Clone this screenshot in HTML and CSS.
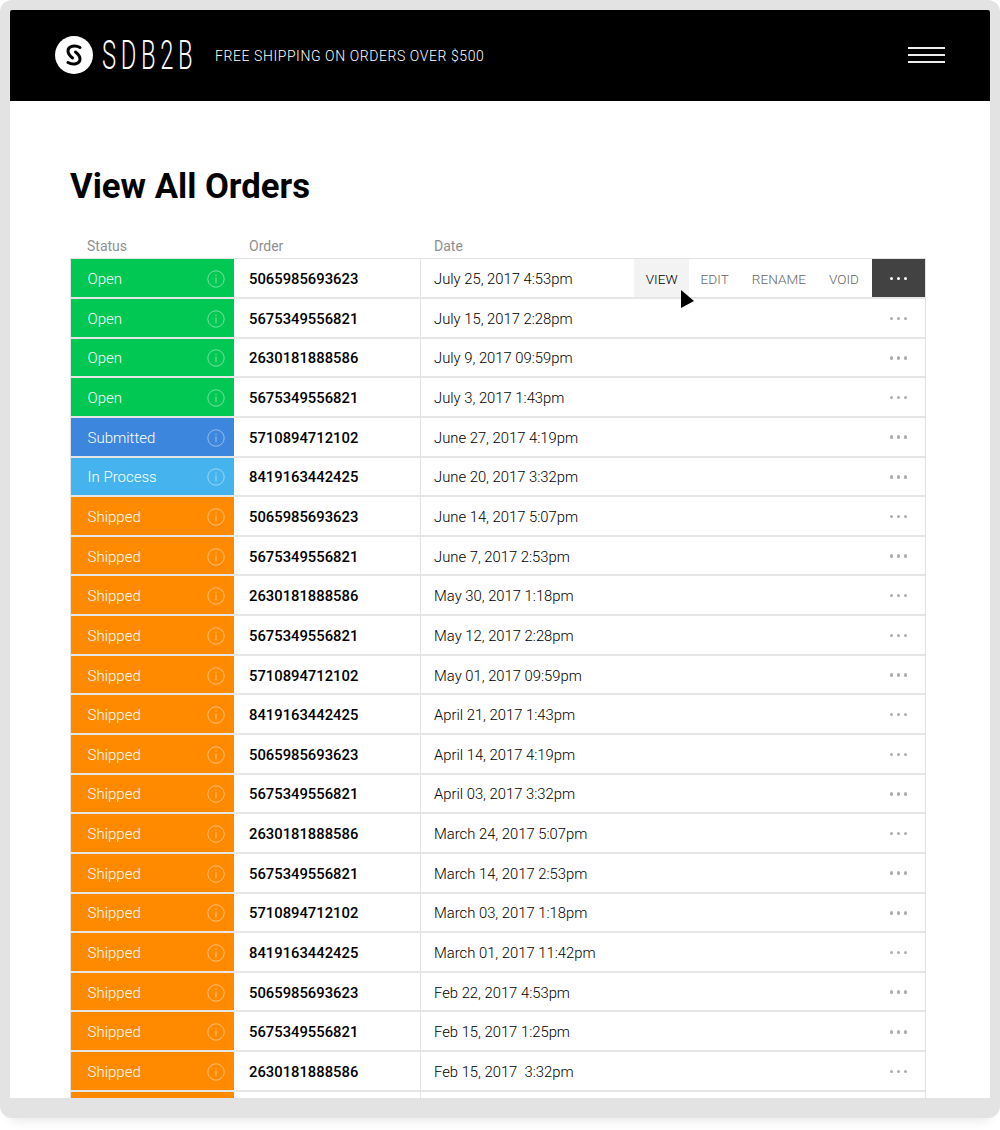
FILE: index.html
```html
<!DOCTYPE html>
<html lang="en">
<head>
    <meta charset="UTF-8">
    <title>View All Orders</title>
    <link rel="stylesheet" href="styles.css">
</head>
<body>
    <svg class="defs" width="0" height="0">
        <symbol id="info" viewBox="0 0 18 18">
            <circle cx="9" cy="9" r="8.2" fill="none" stroke="currentColor" stroke-width="0.9"/>
            <rect x="8.5" y="4.6" width="1" height="1.4" fill="currentColor"/>
            <rect x="8.5" y="7.4" width="1" height="6" fill="currentColor"/>
        </symbol>
    </svg>
    <div class="frame">
        <header class="topbar">
            <svg class="logo-mark" viewBox="0 0 38 38" width="38" height="38">
                <circle cx="19" cy="19" r="19" fill="#fff"/>
                <path d="M25 11.500C20 8.500 13 10 13 15C13 18 15 20 17.500 22" fill="none" stroke="#000" stroke-width="3" stroke-linecap="round"/>
                <path d="M13 26.500C18 29.500 25 28 25 23C25 20 23 18 20.500 16" fill="none" stroke="#000" stroke-width="3" stroke-linecap="round"/>
            </svg>
            <span class="logo-text">SDB2B</span>
            <span class="promo">FREE SHIPPING ON ORDERS OVER $500</span>
            <div class="burger"><i></i><i></i><i></i></div>
        </header>
        <main class="content">
            <h1>View All Orders</h1>
            <div class="columns">
                <span class="col-status">Status</span>
                <span class="col-order">Order</span>
                <span>Date</span>
            </div>
            <div class="orders">
                <div class="row">
                    <div class="status open">Open<svg class="info"><use href="#info"/></svg></div>
                    <div class="number">5065985693623</div>
                    <div class="date">July 25, 2017 4:53pm</div>
                    <div class="actions">
                        <span class="action current">VIEW</span>
                        <span class="action">EDIT</span>
                        <span class="action">RENAME</span>
                        <span class="action">VOID</span>
                        <span class="more active"><b></b><b></b><b></b></span>
                    </div>
                    <svg class="cursor" viewBox="0 0 13 18" width="13" height="18"><path d="M0 0L13 11L0 18Z"/></svg>
                </div>
                <div class="row"><div class="status open">Open<svg class="info"><use href="#info"/></svg></div><div class="number">5675349556821</div><div class="date">July 15, 2017 2:28pm</div><span class="more"><b></b><b></b><b></b></span></div>
                <div class="row"><div class="status open">Open<svg class="info"><use href="#info"/></svg></div><div class="number">2630181888586</div><div class="date">July 9, 2017 09:59pm</div><span class="more"><b></b><b></b><b></b></span></div>
                <div class="row"><div class="status open">Open<svg class="info"><use href="#info"/></svg></div><div class="number">5675349556821</div><div class="date">July 3, 2017 1:43pm</div><span class="more"><b></b><b></b><b></b></span></div>
                <div class="row"><div class="status submitted">Submitted<svg class="info"><use href="#info"/></svg></div><div class="number">5710894712102</div><div class="date">June 27, 2017 4:19pm</div><span class="more"><b></b><b></b><b></b></span></div>
                <div class="row"><div class="status process">In Process<svg class="info"><use href="#info"/></svg></div><div class="number">8419163442425</div><div class="date">June 20, 2017 3:32pm</div><span class="more"><b></b><b></b><b></b></span></div>
                <div class="row"><div class="status shipped">Shipped<svg class="info"><use href="#info"/></svg></div><div class="number">5065985693623</div><div class="date">June 14, 2017 5:07pm</div><span class="more"><b></b><b></b><b></b></span></div>
                <div class="row"><div class="status shipped">Shipped<svg class="info"><use href="#info"/></svg></div><div class="number">5675349556821</div><div class="date">June 7, 2017 2:53pm</div><span class="more"><b></b><b></b><b></b></span></div>
                <div class="row"><div class="status shipped">Shipped<svg class="info"><use href="#info"/></svg></div><div class="number">2630181888586</div><div class="date">May 30, 2017 1:18pm</div><span class="more"><b></b><b></b><b></b></span></div>
                <div class="row"><div class="status shipped">Shipped<svg class="info"><use href="#info"/></svg></div><div class="number">5675349556821</div><div class="date">May 12, 2017 2:28pm</div><span class="more"><b></b><b></b><b></b></span></div>
                <div class="row"><div class="status shipped">Shipped<svg class="info"><use href="#info"/></svg></div><div class="number">5710894712102</div><div class="date">May 01, 2017 09:59pm</div><span class="more"><b></b><b></b><b></b></span></div>
                <div class="row"><div class="status shipped">Shipped<svg class="info"><use href="#info"/></svg></div><div class="number">8419163442425</div><div class="date">April 21, 2017 1:43pm</div><span class="more"><b></b><b></b><b></b></span></div>
                <div class="row"><div class="status shipped">Shipped<svg class="info"><use href="#info"/></svg></div><div class="number">5065985693623</div><div class="date">April 14, 2017 4:19pm</div><span class="more"><b></b><b></b><b></b></span></div>
                <div class="row"><div class="status shipped">Shipped<svg class="info"><use href="#info"/></svg></div><div class="number">5675349556821</div><div class="date">April 03, 2017 3:32pm</div><span class="more"><b></b><b></b><b></b></span></div>
                <div class="row"><div class="status shipped">Shipped<svg class="info"><use href="#info"/></svg></div><div class="number">2630181888586</div><div class="date">March 24, 2017 5:07pm</div><span class="more"><b></b><b></b><b></b></span></div>
                <div class="row"><div class="status shipped">Shipped<svg class="info"><use href="#info"/></svg></div><div class="number">5675349556821</div><div class="date">March 14, 2017 2:53pm</div><span class="more"><b></b><b></b><b></b></span></div>
                <div class="row"><div class="status shipped">Shipped<svg class="info"><use href="#info"/></svg></div><div class="number">5710894712102</div><div class="date">March 03, 2017 1:18pm</div><span class="more"><b></b><b></b><b></b></span></div>
                <div class="row"><div class="status shipped">Shipped<svg class="info"><use href="#info"/></svg></div><div class="number">8419163442425</div><div class="date">March 01, 2017 11:42pm</div><span class="more"><b></b><b></b><b></b></span></div>
                <div class="row"><div class="status shipped">Shipped<svg class="info"><use href="#info"/></svg></div><div class="number">5065985693623</div><div class="date">Feb 22, 2017 4:53pm</div><span class="more"><b></b><b></b><b></b></span></div>
                <div class="row"><div class="status shipped">Shipped<svg class="info"><use href="#info"/></svg></div><div class="number">5675349556821</div><div class="date">Feb 15, 2017 1:25pm</div><span class="more"><b></b><b></b><b></b></span></div>
                <div class="row"><div class="status shipped">Shipped<svg class="info"><use href="#info"/></svg></div><div class="number">2630181888586</div><div class="date">Feb 15, 2017 &nbsp;3:32pm</div><span class="more"><b></b><b></b><b></b></span></div>
                <div class="row"><div class="status shipped"></div><div class="number"></div><div class="date"></div></div>
            </div>
        </main>
    </div>
</body>
</html>
```

FILE: styles.css
```css
html, body {
    margin: 0;
    padding: 0;
    height: 1130px;
    overflow: hidden;
    background: #fff;
}
body {
    font-family: Roboto, "Liberation Sans", sans-serif;
    color: #111;
}
.defs {
    display: block;
    height: 0;
}
.frame {
    box-sizing: border-box;
    height: 1118px;
    border: 10px solid #e3e3e3;
    border-bottom-width: 20px;
    border-radius: 12px;
    background: #fff;
    overflow: hidden;
    box-shadow: 0 12px 12px -10px rgba(0, 0, 0, 0.1);
}

/* top bar */
.topbar {
    display: flex;
    align-items: center;
    height: 90.5px;
    padding: 0 45px;
    background: #000;
    color: #fff;
}
.logo-mark {
    flex: none;
}
.logo-text {
    display: inline-block;
    width: 90px;
    margin-left: 9px;
    font-size: 41px;
    font-weight: 300;
    letter-spacing: 8px;
    line-height: 1;
    white-space: nowrap;
    transform: scaleX(0.58);
    transform-origin: left center;
}
.promo {
    margin: 1px 0 0 23px;
    font-size: 14px;
    font-weight: 300;
    letter-spacing: 0.58px;
}
.burger {
    margin-left: auto;
    width: 37px;
}
.burger i {
    display: block;
    height: 2px;
    margin-top: 5px;
    background: #eee;
}
.burger i:first-child {
    margin-top: 0;
}

/* orders */
.content {
    padding: 64.5px 64px 0 60px;
}
h1 {
    margin: 0;
    font-size: 34.7px;
    font-weight: 700;
    line-height: 42px;
    color: #000;
}
.columns {
    display: flex;
    margin-top: 29px;
    padding-left: 17px;
    font-size: 14px;
    line-height: 20px;
    color: #8f8f8f;
}
.col-status {
    width: 162px;
}
.col-order {
    width: 185px;
}
.orders {
    margin-top: 2.3px;
    border-top: 1px solid #e2e2e2;
    border-right: 1px solid #e2e2e2;
    border-left: 1px solid #e2e2e2;
}
.row {
    position: relative;
    display: flex;
    box-sizing: border-box;
    height: 39.65px;
    border-bottom: 2px solid #e6e6e6;
}
.status {
    display: flex;
    align-items: center;
    box-sizing: border-box;
    width: 163px;
    padding: 2px 0 0 16.5px;
    font-size: 15px;
    font-weight: 300;
    color: #fff;
}
.open { background: #00c853; }
.submitted { background: #3d86dd; }
.process { background: #45b4ee; }
.shipped { background: #ff8a00; }
.info {
    width: 18px;
    height: 18px;
    margin-left: auto;
    margin-right: 9px;
    color: rgba(255, 255, 255, 0.5);
}
.number {
    display: flex;
    align-items: center;
    box-sizing: border-box;
    width: 187px;
    padding: 2px 0 0 15px;
    border-right: 1px solid #e2e2e2;
    font-size: 14.8px;
    font-weight: 500;
    color: #000;
}
.date {
    display: flex;
    align-items: center;
    padding: 2px 0 0 13px;
    font-size: 14.8px;
    font-weight: 300;
    color: #000;
    white-space: pre;
}
.more {
    display: flex;
    align-items: center;
    justify-content: center;
    gap: 3.500px;
    box-sizing: border-box;
    width: 53px;
    padding-top: 1px;
    margin-left: auto;
}
.more b {
    width: 3.500px;
    height: 3.500px;
    border-radius: 50%;
    background: #adadad;
}
.more.active {
    margin-left: 1.500px;
    background: #424242;
}
.more.active b {
    background: #fff;
}
.actions {
    display: flex;
    margin-left: auto;
    font-size: 13.6px;
    font-weight: 300;
    color: #666;
}
.action {
    display: flex;
    align-items: center;
    padding: 2px 11.500px 0;
}
.current {
    background: #f3f3f3;
    color: #000;
}
.cursor {
    position: absolute;
    top: 31px;
    left: 610px;
    z-index: 1;
}
```
